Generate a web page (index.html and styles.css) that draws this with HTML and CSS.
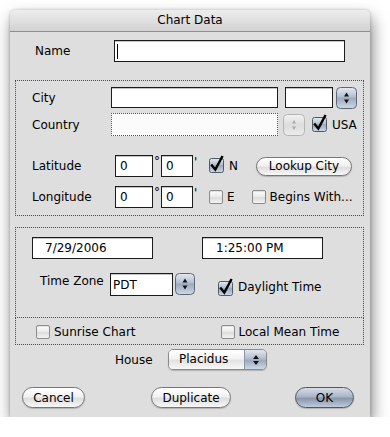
FILE: index.html
```html
<!DOCTYPE html>
<html>
<head>
<meta charset="utf-8">
<link rel="stylesheet" href="styles.css">
</head>
<body>
<svg class="defs" width="0" height="0">
  <defs>
    <linearGradient id="aqua" x1="0" y1="0" x2="0" y2="1">
      <stop offset="0" stop-color="#e4eaf2"/>
      <stop offset="0.45" stop-color="#b3bfcf"/>
      <stop offset="0.5" stop-color="#9aa9bd"/>
      <stop offset="1" stop-color="#d0d9e6"/>
    </linearGradient>
    <linearGradient id="dis" x1="0" y1="0" x2="0" y2="1">
      <stop offset="0" stop-color="#f2f2f2"/>
      <stop offset="0.5" stop-color="#dcdcdc"/>
      <stop offset="1" stop-color="#ececec"/>
    </linearGradient>
  </defs>
</svg>
<div class="window">
  <div class="titlebar">Chart Data</div>
  <div class="content">
    <div class="row name-row">
      <span class="label w-name">Name</span>
      <div class="field f-name"><span class="caret"></span></div>
    </div>

    <div class="group g-loc">
      <div class="row r-city">
        <span class="label w-city">City</span>
        <div class="field f-city"></div>
        <div class="field f-state"></div>
        <svg class="stepper" width="21" height="22" viewBox="0 0 21 22"><rect x="0.5" y="0.5" width="20" height="21" rx="4" fill="url(#aqua)" stroke="#5c6878"/><path d="M10.5 5.5 L13 9.5 H8 Z M10.5 16.5 L13 12.5 H8 Z" fill="#111"/></svg>
      </div>
      <div class="row r-country">
        <span class="label w-city">Country</span>
        <div class="field f-country"></div>
        <svg class="stepper dis" width="22" height="22" viewBox="0 0 22 22"><rect x="0.5" y="0.5" width="21" height="21" rx="4" fill="url(#dis)" stroke="#b4b4b4"/><path d="M11 6 L13 9.5 H9 Z M11 16 L13 12.5 H9 Z" fill="#a8a8a8"/></svg>
        <span class="check usa-cb"><svg width="16" height="17" viewBox="0 0 16 17"><rect x="0.5" y="2.5" width="14" height="14" rx="2" fill="url(#aqua)" stroke="#4f5a68"/><path d="M3 9.5 L6.3 13.5 L13 1" fill="none" stroke="#000" stroke-width="2.4" stroke-linecap="square"/></svg></span>
        <span class="cb-text">USA</span>
      </div>
      <div class="row r-lat">
        <span class="label w-lat">Latitude</span>
        <div class="field f-deg">0</div>
        <span class="deg">°</span>
        <div class="field f-min">0</div>
        <span class="min">'</span>
        <span class="check"><svg width="16" height="17" viewBox="0 0 16 17"><rect x="0.5" y="2.5" width="14" height="14" rx="2" fill="url(#aqua)" stroke="#4f5a68"/><path d="M3 9.5 L6.3 13.5 L13 1" fill="none" stroke="#000" stroke-width="2.4" stroke-linecap="square"/></svg></span>
        <span class="cb-text">N</span>
        <span class="btn b-lookup">Lookup City</span>
      </div>
      <div class="row r-long">
        <span class="label w-lat">Longitude</span>
        <div class="field f-deg">0</div>
        <span class="deg">°</span>
        <div class="field f-min">0</div>
        <span class="min">'</span>
        <span class="cb"></span>
        <span class="cb-text">E</span>
        <span class="cb cb-begins"></span>
        <span class="cb-text">Begins With...</span>
      </div>
    </div>

    <div class="group g-time">
      <div class="row r-date">
        <div class="field f-date">7/29/2006</div>
        <div class="field f-time">1:25:00 PM</div>
      </div>
      <div class="row r-tz">
        <span class="label tz-label">Time Zone</span>
        <div class="field f-tz">PDT</div>
        <svg class="stepper tz-step" width="20" height="22" viewBox="0 0 20 22"><rect x="0.5" y="0.5" width="19" height="21" rx="4" fill="url(#aqua)" stroke="#5c6878"/><path d="M10 5.5 L12.5 9.5 H7.5 Z M10 16.5 L12.5 12.5 H7.5 Z" fill="#111"/></svg>
        <span class="check dst-cb"><svg width="16" height="17" viewBox="0 0 16 17"><rect x="0.5" y="2.5" width="14" height="14" rx="2" fill="url(#aqua)" stroke="#4f5a68"/><path d="M3 9.5 L6.3 13.5 L13 1" fill="none" stroke="#000" stroke-width="2.4" stroke-linecap="square"/></svg></span>
        <span class="cb-text dst-text">Daylight Time</span>
      </div>
    </div>

    <div class="group g-opts">
      <div class="row r-opts">
        <span class="cb"></span>
        <span class="cb-text">Sunrise Chart</span>
        <span class="cb cb-lmt"></span>
        <span class="cb-text">Local Mean Time</span>
      </div>
    </div>

    <div class="row r-house">
      <span class="label w-house">House</span>
      <div class="popup">
        <span class="popup-text">Placidus</span>
        <span class="popup-arrows"><svg width="8" height="12" viewBox="0 0 8 12"><path d="M4 1 L7 5 H1 Z M4 11 L7 7 H1 Z" fill="#111"/></svg></span>
      </div>
    </div>

    <div class="row r-buttons">
      <span class="btn b-cancel">Cancel</span>
      <span class="btn b-dup">Duplicate</span>
      <span class="btn b-ok">OK</span>
    </div>
  </div>
</div>
</body>
</html>
```

FILE: styles.css
```css
* { box-sizing: border-box; }

body {
  margin: 0;
  background: #ffffff;
  font-family: "DejaVu Sans", sans-serif;
  font-size: 12px;
  color: #000;
}

.defs { position: absolute; width: 0; height: 0; }

.window {
  margin: 10px 0 0 10px;
  width: 360px;
  height: 407px;
  background: #dedede;
  border-radius: 5px 5px 0 0;
  box-shadow: 2px 8px 16px rgba(0, 0, 0, 0.5), 0 0 3px rgba(0, 0, 0, 0.25);
}

.titlebar {
  height: 22px;
  line-height: 21px;
  text-align: center;
  border-bottom: 1px solid #8e8e8e;
  border-radius: 5px 5px 0 0;
  background: linear-gradient(#eeeeee, #d2d2d2);
}

.content { padding: 8px 6px 0 5px; }

.row { display: flex; align-items: center; }

.label { flex: none; }

.field {
  flex: none;
  background: #fff;
  border: 1px solid #1c1c1c;
  box-shadow: inset 0 1px 0 #c4c4c4;
  padding-left: 4px;
  white-space: nowrap;
}

/* Name */
.name-row { height: 22px; }
.w-name { margin-left: 20px; width: 79px; }
.f-name { width: 231px; height: 22px; position: relative; }
.caret {
  position: absolute;
  left: 2px;
  top: 3px;
  width: 1px;
  height: 15px;
  background: #000;
}

/* Groups */
.group {
  width: 349px;
  border: 1px dotted #4a4a4a;
}

.g-loc { margin-top: 18px; padding: 6px 0 7px 16px; }

.w-city { width: 79px; }
.w-lat { width: 83px; }

.r-city { height: 21px; }
.f-city { width: 167px; height: 21px; }
.f-state { width: 48px; height: 21px; margin-left: 7px; }
.stepper { flex: none; display: block; margin-left: 3px; }

.r-country { height: 23px; margin-top: 5px; }
.f-country {
  width: 167px;
  height: 23px;
  border: 1px dotted #555;
  box-shadow: none;
  background: #fbfbfb;
}
.stepper.dis { margin-left: 5px; }

.check { flex: none; display: block; width: 16px; height: 17px; margin-top: -3px; }
.check svg { display: block; overflow: visible; }
.usa-cb { margin-left: 7px; }

.cb-text { flex: none; margin-left: 4px; white-space: nowrap; }

.r-lat { height: 22px; margin-top: 19px; }
.r-long { height: 22px; margin-top: 9px; }
.f-deg { width: 38px; height: 22px; line-height: 20px; }
.f-min { width: 32px; height: 22px; line-height: 20px; }
.deg { width: 8px; text-align: center; align-self: flex-start; line-height: 12px; }
.min { width: 16px; padding-left: 1px; align-self: flex-start; line-height: 14px; }

.cb {
  flex: none;
  display: block;
  width: 14px;
  height: 14px;
  border: 1px solid #8c8c8c;
  border-radius: 2px;
  background: linear-gradient(#ffffff, #e9e9e9 50%, #dcdcdc 55%, #f4f4f4);
  box-shadow: inset 0 1px 1px rgba(0, 0, 0, 0.12);
}
.cb-begins { margin-left: 17px; }

/* Buttons */
.btn {
  flex: none;
  display: flex;
  align-items: center;
  justify-content: center;
  height: 21px;
  border: 1px solid #777;
  border-radius: 11px;
  background: linear-gradient(#ffffff, #f2f2f2 45%, #dedede 55%, #f7f7f7);
  box-shadow: 0 1px 1px rgba(0, 0, 0, 0.2);
  white-space: nowrap;
}
.b-lookup { width: 96px; height: 19px; margin-left: 18px; }

/* Time group */
.g-time { margin-top: 11px; padding: 9px 0 21px 16px; }
.r-date { height: 22px; }
.f-date { width: 121px; height: 22px; line-height: 20px; padding-left: 12px; }
.f-time { width: 121px; height: 22px; line-height: 20px; padding-left: 13px; margin-left: 49px; }

.r-tz { height: 23px; margin-top: 14px; align-items: flex-start; }
.tz-label { margin-left: 8px; width: 70px; margin-top: 1px; }
.f-tz { width: 63px; height: 23px; line-height: 22px; padding-left: 2px; }
.tz-step { margin-left: 2px; }
.dst-cb { margin-left: 23px; margin-top: 6px; }
.dst-text { margin-top: 7px; }

.g-opts { border-top: none; padding: 7px 0 5px 20px; }
.r-opts { height: 14px; }
.cb-lmt { margin-left: 85px; }

/* House */
.r-house { height: 21px; margin-top: 4px; }
.w-house { margin-left: 100px; width: 53px; }
.popup {
  flex: none;
  display: flex;
  width: 99px;
  height: 21px;
  border: 1px solid #8a8a8a;
  border-radius: 5px;
  overflow: hidden;
  box-shadow: 0 1px 1px rgba(0, 0, 0, 0.2);
}
.popup-text {
  flex: 1;
  padding-left: 10px;
  line-height: 19px;
  background: linear-gradient(#ffffff, #f3f3f3 45%, #e2e2e2 55%, #f8f8f8);
}
.popup-arrows {
  flex: none;
  width: 22px;
  display: flex;
  align-items: center;
  justify-content: center;
  border-left: 1px solid #8b97a8;
  background: linear-gradient(#e0e7f0, #b2bece 45%, #9aa9bd 55%, #cfd8e5);
}
.popup-arrows svg { display: block; }

/* Bottom buttons */
.r-buttons { height: 21px; margin-top: 17px; }
.b-cancel { margin-left: 7px; width: 63px; }
.b-dup { margin-left: 66px; width: 80px; }
.b-ok {
  margin-left: 64px;
  width: 59px;
  border-color: #4f5764;
  background: linear-gradient(#d6dde8, #a9b5c6 45%, #8797ad 55%, #c0cbdb);
}
```
